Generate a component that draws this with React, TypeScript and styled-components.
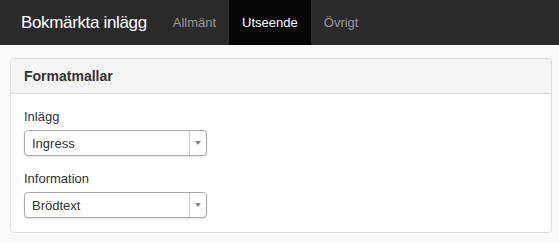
import { createGlobalStyle } from 'styled-components';
import styled from 'styled-components';

const GlobalStyle = createGlobalStyle`
	html, body {
		margin: 0;
		padding: 0;
		background: #f9f9f9;
		font-family: 'Liberation Sans', Arial, sans-serif;
		color: #333;
	}
`;

const Navbar = styled.nav`
	height: 45px;
	background: #2a2a2a;
	display: flex;
	align-items: stretch;
	padding-left: 21px;
`;

const Brand = styled.div`
	display: flex;
	align-items: center;
	color: #fff;
	font-size: 17px;
	letter-spacing: -0.35px;
	margin-right: 13px;
`;

const NavItem = styled.div<{ $active?: boolean }>`
	display: flex;
	align-items: center;
	padding: 0 13px;
	font-size: 13px;
	color: ${(p) => (p.$active ? '#fff' : '#999')};
	background: ${(p) => (p.$active ? '#050505' : 'transparent')};
`;

const Main = styled.main`
	padding: 13px 7px 10px 10px;
`;

const Panel = styled.section`
	background: #fff;
	border: 1px solid #ddd;
	border-radius: 4px;
`;

const PanelHeading = styled.h3`
	margin: 0;
	height: 34px;
	display: flex;
	align-items: center;
	padding: 0 13px;
	background: #f4f4f4;
	border-bottom: 1px solid #ddd;
	border-radius: 4px 4px 0 0;
	font-size: 14px;
	font-weight: bold;
	color: #333;
`;

const PanelBody = styled.div`
	padding: 15px 13px 14px;
	display: flex;
	flex-direction: column;
`;

const Field = styled.div`
	display: flex;
	flex-direction: column;
	& + & {
		margin-top: 15px;
	}
`;

const Label = styled.label`
	font-size: 13px;
	color: #333;
	margin-bottom: 6px;
`;

const Select = styled.div`
	width: 183px;
	height: 26px;
	box-sizing: border-box;
	border: 1px solid #aaa;
	border-radius: 4px;
	box-shadow: 0 1px 2px rgba(0, 0, 0, 0.12);
	background: #fff;
	display: flex;
	align-items: stretch;
	font-size: 13px;
	color: #333;
`;

const SelectValue = styled.span`
	flex: 1;
	display: flex;
	align-items: center;
	padding-left: 7px;
`;

const Arrow = styled.span`
	width: 16px;
	border-left: 1px solid #ccc;
	display: flex;
	align-items: center;
	justify-content: center;
	&::after {
		content: '';
		border-left: 3px solid transparent;
		border-right: 3px solid transparent;
		border-top: 4px solid #888;
	}
`;

const fields = [
	{ label: 'Inlägg', value: 'Ingress' },
	{ label: 'Information', value: 'Brödtext' },
];

const App = () => {
	return (
		<>
			<GlobalStyle />
			<Navbar>
				<Brand>Bokmärkta inlägg</Brand>
				<NavItem>Allmänt</NavItem>
				<NavItem $active>Utseende</NavItem>
				<NavItem>Övrigt</NavItem>
			</Navbar>
			<Main>
				<Panel>
					<PanelHeading>Formatmallar</PanelHeading>
					<PanelBody>
						{fields.map((f) => (
							<Field key={f.label}>
								<Label>{f.label}</Label>
								<Select>
									<SelectValue>{f.value}</SelectValue>
									<Arrow />
								</Select>
							</Field>
						))}
					</PanelBody>
				</Panel>
			</Main>
		</>
	);
};

export default App;
